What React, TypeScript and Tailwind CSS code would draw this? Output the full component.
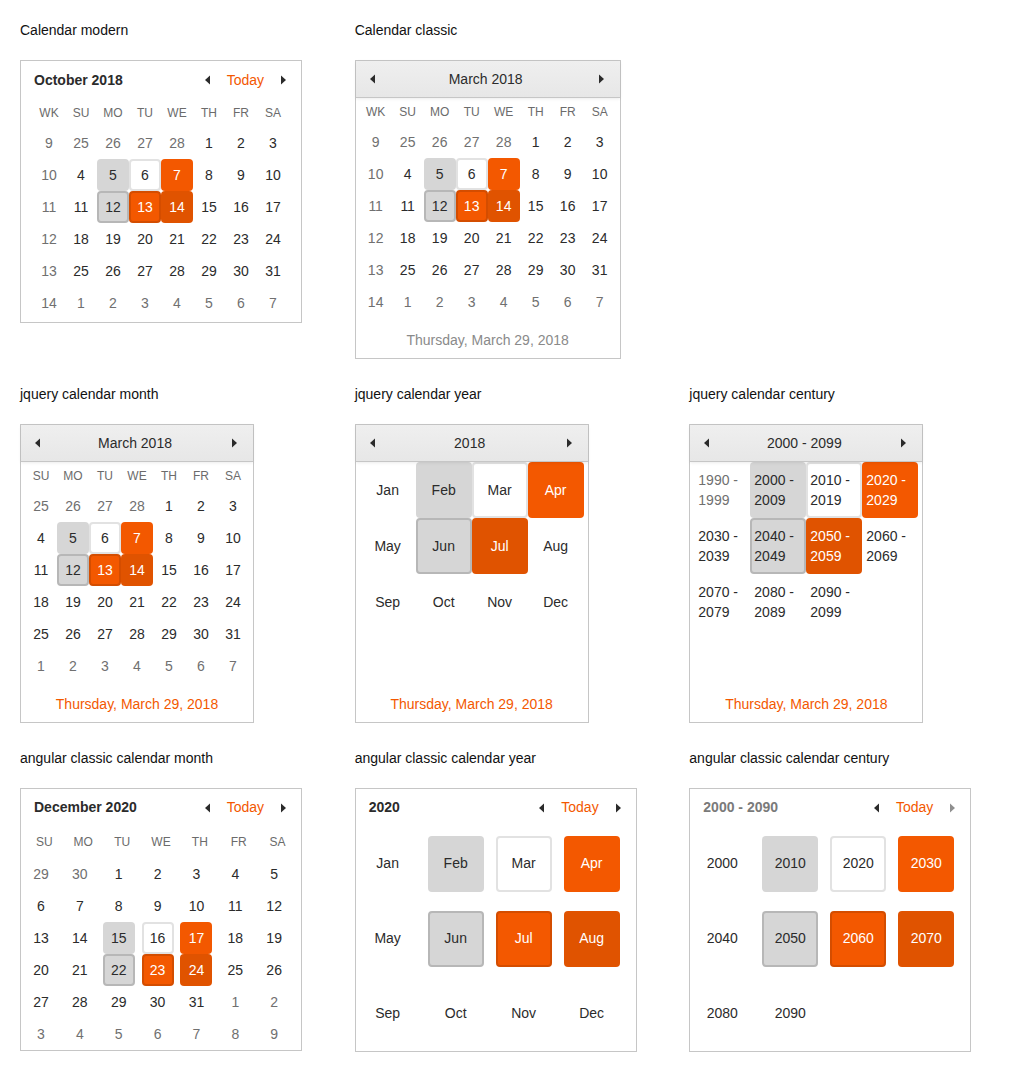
import type { ReactNode } from 'react'

type St = 'n' | 'o' | 'h' | 'f' | 't' | 's' | 'sf' | 'sh'

// cell look per state: normal, other-month, hover, focused, today, selected, selected+focused, selected+hover
const stateCls: Record<St, string> = {
  n: 'border-2 border-transparent text-[#2b2b2b]',
  o: 'border-2 border-transparent text-[#707070]',
  h: 'border-2 border-transparent bg-[#d6d6d6] text-[#2b2b2b]',
  f: 'border-2 border-[#b7b7b7] bg-[#d6d6d6] text-[#2b2b2b]',
  t: 'border-2 border-[#e2e2e2] bg-white text-[#2b2b2b]',
  s: 'border-2 border-transparent bg-[#f35800] text-white',
  sf: 'border-2 border-[#d44d00] bg-[#f35800] text-white',
  sh: 'border-2 border-transparent bg-[#e05300] text-white',
}

type Cell = [string, St]

function parseRow(row: string): Cell[] {
  return row.split(' ').map((tok) => {
    const [v, s] = tok.split(':')
    return [v, (s as St) || 'n']
  })
}

const march = [
  '25:o 26:o 27:o 28:o 1 2 3',
  '4 5:h 6:t 7:s 8 9 10',
  '11 12:f 13:sf 14:sh 15 16 17',
  '18 19 20 21 22 23 24',
  '25 26 27 28 29 30 31',
  '1:o 2:o 3:o 4:o 5:o 6:o 7:o',
].map(parseRow)

const december = [
  '29:o 30:o 1 2 3 4 5',
  '6 7 8 9 10 11 12',
  '13 14 15:h 16:t 17:s 18 19',
  '20 21 22:f 23:sf 24:sh 25 26',
  '27 28 29 30 31 1:o 2:o',
  '3:o 4:o 5:o 6:o 7:o 8:o 9:o',
].map(parseRow)

const weeks = ['9', '10', '11', '12', '13', '14']
const days = ['SU', 'MO', 'TU', 'WE', 'TH', 'FR', 'SA']

function Arrow({ dir, muted = false }: { dir: 'left' | 'right'; muted?: boolean }) {
  return (
    <svg width="16" height="16" viewBox="0 0 16 16" className={muted ? 'fill-[#8f8f8f]' : 'fill-[#2b2b2b]'}>
      {dir === 'left' ? <path d="M10 3.5 L5 8 L10 12.5 Z" /> : <path d="M6 3.5 L11 8 L6 12.5 Z" />}
    </svg>
  )
}

function Box({ width, children }: { width: string; children: ReactNode }) {
  return <div className={`${width} border border-[#c6c6c6] bg-white`}>{children}</div>
}

// header with bold title on the left and arrows + Today on the right
function ModernHeader({ title, h, mutedTitle = false, mutedNext = false }: { title: string; h: string; mutedTitle?: boolean; mutedNext?: boolean }) {
  return (
    <div className={`${h} flex items-center justify-between pl-[13px] pr-[10px]`}>
      <span className={`font-bold ${mutedTitle ? 'text-[#7a7a7a]' : 'text-[#2b2b2b]'}`}>{title}</span>
      <div className="flex items-center gap-[11px]">
        <Arrow dir="left" />
        <span className="text-[#f35800]">Today</span>
        <Arrow dir="right" muted={mutedNext} />
      </div>
    </div>
  )
}

// grey bar header used by the classic / jquery calendars
function BarHeader({ title }: { title: string }) {
  return (
    <div className="h-[37px] flex items-center justify-between bg-linear-to-b from-[#efefef] to-[#e7e7e7] border-b border-[#c6c6c6] shadow-[0_1px_3px_rgba(0,0,0,0.08)] relative">
      <div className="w-[34px] flex justify-center">
        <Arrow dir="left" />
      </div>
      <span className="text-[#2b2b2b]">{title}</span>
      <div className="w-[38px] flex justify-center">
        <Arrow dir="right" />
      </div>
    </div>
  )
}

function DayCell({ cell }: { cell: Cell }) {
  return (
    <div className={`w-[32px] h-[32px] rounded-[4px] flex items-center justify-center ${stateCls[cell[1]]}`}>
      {cell[0]}
    </div>
  )
}

function MonthTable({ withWeek }: { withWeek: boolean }) {
  const heads = withWeek ? ['WK', ...days] : days
  return (
    <div>
      <div className={`grid ${withWeek ? 'grid-cols-[repeat(8,32px)]' : 'grid-cols-[repeat(7,32px)]'} h-[28px] items-center text-[12px] text-[#6b6b6b]`}>
        {heads.map((d) => (
          <div key={d} className="text-center">
            {d}
          </div>
        ))}
      </div>
      {march.map((row, i) => (
        <div key={i} className={`grid ${withWeek ? 'grid-cols-[repeat(8,32px)]' : 'grid-cols-[repeat(7,32px)]'}`}>
          {withWeek && <DayCell cell={[weeks[i], 'o']} />}
          {row.map((c, j) => (
            <DayCell key={j} cell={c} />
          ))}
        </div>
      ))}
    </div>
  )
}

function Footer({ orange }: { orange: boolean }) {
  return (
    <div className={`h-[40px] pt-[5px] flex items-center justify-center ${orange ? 'text-[#f35800]' : 'text-[#8a8a8a]'}`}>
      Thursday, March 29, 2018
    </div>
  )
}

function CalendarModern() {
  return (
    <Box width="w-[282px]">
      <ModernHeader title="October 2018" h="h-[38px]" />
      <div className="px-[12px] pb-[3px]">
        <MonthTable withWeek />
      </div>
    </Box>
  )
}

function CalendarClassic() {
  return (
    <Box width="w-[266px]">
      <BarHeader title="March 2018" />
      <div className="px-[4px]">
        <MonthTable withWeek />
      </div>
      <Footer orange={false} />
    </Box>
  )
}

function JqueryMonth() {
  return (
    <Box width="w-[234px]">
      <BarHeader title="March 2018" />
      <div className="px-[4px]">
        <MonthTable withWeek={false} />
      </div>
      <Footer orange />
    </Box>
  )
}

const yearCells: Cell[] = [
  ['Jan', 'n'], ['Feb', 'h'], ['Mar', 't'], ['Apr', 's'],
  ['May', 'n'], ['Jun', 'f'], ['Jul', 'sh'], ['Aug', 'n'],
  ['Sep', 'n'], ['Oct', 'n'], ['Nov', 'n'], ['Dec', 'n'],
]

const centuryCells: Cell[] = [
  ['1990 - 1999', 'o'], ['2000 - 2009', 'h'], ['2010 - 2019', 't'], ['2020 - 2029', 's'],
  ['2030 - 2039', 'n'], ['2040 - 2049', 'f'], ['2050 - 2059', 'sh'], ['2060 - 2069', 'n'],
  ['2070 - 2079', 'n'], ['2080 - 2089', 'n'], ['2090 - 2099', 'n'],
]

function JqueryYear() {
  return (
    <Box width="w-[234px]">
      <BarHeader title="2018" />
      <div className="h-[220px] px-[4px] grid grid-cols-[repeat(4,56px)] auto-rows-[56px] content-start">
        {yearCells.map(([v, s]) => (
          <div key={v} className={`rounded-[4px] flex items-center justify-center ${stateCls[s]}`}>
            {v}
          </div>
        ))}
      </div>
      <Footer orange />
    </Box>
  )
}

function JqueryCentury() {
  return (
    <Box width="w-[234px]">
      <BarHeader title="2000 - 2099" />
      <div className="h-[220px] px-[4px] grid grid-cols-[repeat(4,56px)] auto-rows-[56px] content-start">
        {centuryCells.map(([v, s]) => (
          <div key={v} className={`rounded-[4px] flex items-center pl-[2px] pr-[4px] leading-[20px] ${stateCls[s]}`}>
            {v}
          </div>
        ))}
      </div>
      <Footer orange />
    </Box>
  )
}

function AngularMonth() {
  return (
    <Box width="w-[282px]">
      <ModernHeader title="December 2020" h="h-[37px]" />
      <div className="px-[4px]">
        <div className="grid grid-cols-7 w-[272px] h-[32px] items-center text-[12px] text-[#6b6b6b]">
          {days.map((d) => (
            <div key={d} className="text-center">
              {d}
            </div>
          ))}
        </div>
        {december.map((row, i) => (
          <div key={i} className="grid grid-cols-7 w-[272px]">
            {row.map((c, j) => (
              <DayCell key={j} cell={c} />
            ))}
          </div>
        ))}
      </div>
    </Box>
  )
}

function AngularGrid({ cells }: { cells: Cell[] }) {
  return (
    <div className="px-[4px] grid grid-cols-4 w-[280px] auto-rows-[75px]">
      {cells.map(([v, s]) => (
        <div key={v} className="flex items-center">
          <div className={`w-[56px] h-[56px] rounded-[4px] flex items-center justify-center ${stateCls[s]}`}>{v}</div>
        </div>
      ))}
    </div>
  )
}

const angYear: Cell[] = [
  ['Jan', 'n'], ['Feb', 'h'], ['Mar', 't'], ['Apr', 's'],
  ['May', 'n'], ['Jun', 'f'], ['Jul', 'sf'], ['Aug', 'sh'],
  ['Sep', 'n'], ['Oct', 'n'], ['Nov', 'n'], ['Dec', 'n'],
]

const angCentury: Cell[] = [
  ['2000', 'n'], ['2010', 'h'], ['2020', 't'], ['2030', 's'],
  ['2040', 'n'], ['2050', 'f'], ['2060', 'sf'], ['2070', 'sh'],
  ['2080', 'n'], ['2090', 'n'],
]

function AngularYear() {
  return (
    <Box width="w-[282px]">
      <ModernHeader title="2020" h="h-[37px]" />
      <AngularGrid cells={angYear} />
    </Box>
  )
}

function AngularCentury() {
  return (
    <Box width="w-[282px]">
      <ModernHeader title="2000 - 2090" h="h-[37px]" mutedTitle mutedNext />
      <div className="h-[225px]">
        <AngularGrid cells={angCentury} />
      </div>
    </Box>
  )
}

function Demo({ label, children }: { label: string; children?: ReactNode }) {
  return (
    <div className="pt-[20px] pb-[5px]">
      <div className="leading-[20px] text-[#111]">{label}</div>
      {children && <div className="mt-[20px]">{children}</div>}
    </div>
  )
}

export default function App() {
  return (
    <div className="w-[1024px] min-h-[1072px] bg-white text-[14px] font-['Liberation_Sans',Arial,sans-serif]">
      <div className="grid grid-cols-3 pl-[20px]">
        <Demo label="Calendar modern">
          <CalendarModern />
        </Demo>
        <Demo label="Calendar classic">
          <CalendarClassic />
        </Demo>
        <div />
        <Demo label="jquery calendar month">
          <JqueryMonth />
        </Demo>
        <Demo label="jquery calendar year">
          <JqueryYear />
        </Demo>
        <Demo label="jquery calendar century">
          <JqueryCentury />
        </Demo>
        <Demo label="angular classic calendar month">
          <AngularMonth />
        </Demo>
        <Demo label="angular classic calendar year">
          <AngularYear />
        </Demo>
        <Demo label="angular classic calendar century">
          <AngularCentury />
        </Demo>
      </div>
    </div>
  )
}
